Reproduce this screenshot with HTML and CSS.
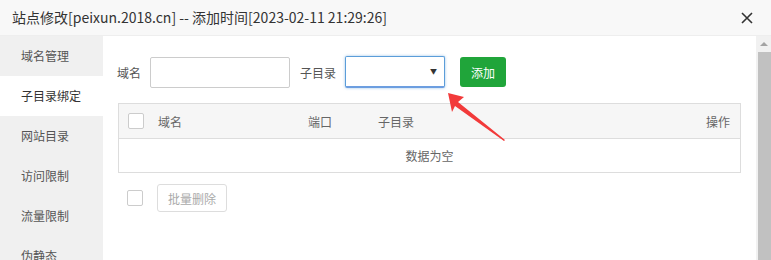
FILE: index.html
```html
<!DOCTYPE html>
<html lang="zh-CN">
<head>
    <meta charset="UTF-8">
    <title>站点修改</title>
    <link rel="stylesheet" href="styles.css">
</head>
<body>
    <div class="dialog">
        <div class="dialog-title">
            <span>站点修改[peixun.2018.cn] -- 添加时间[2023-02-11 21:29:26]</span>
            <svg class="close" width="12" height="12" viewBox="0 0 12 12">
                <path d="M1 1L11 11M11 1L1 11" stroke="#333" stroke-width="1.6" fill="none"/>
            </svg>
        </div>
        <div class="dialog-body">
            <ul class="side-menu">
                <li>域名管理</li>
                <li class="active">子目录绑定</li>
                <li>网站目录</li>
                <li>访问限制</li>
                <li>流量限制</li>
                <li>伪静态</li>
            </ul>

            <div class="content">
                <div class="form-row">
                    <span class="label">域名</span>
                    <input class="text-input" type="text">
                    <span class="label">子目录</span>
                    <div class="select">▼</div>
                    <button class="btn-green">添加</button>
                </div>

                <div class="table">
                    <div class="table-head">
                        <span class="checkbox"></span>
                        <span class="col-domain">域名</span>
                        <span class="col-port">端口</span>
                        <span class="col-dir">子目录</span>
                        <span class="col-op">操作</span>
                    </div>
                    <div class="table-empty">数据为空</div>
                </div>

                <div class="batch-row">
                    <span class="checkbox"></span>
                    <button class="btn-disabled">批量删除</button>
                </div>

                <!-- annotation arrow over the page -->
                <svg class="pointer" width="70" height="60" viewBox="0 0 70 60">
                    <polygon points="2,2 18,6 12,11 59,49 58,50 9,15 6,21" fill="#f23a3a"/>
                </svg>
            </div>

            <div class="scrollbar">
                <div class="scroll-up"></div>
                <div class="scroll-thumb"></div>
            </div>
        </div>
    </div>
</body>
</html>
```

FILE: styles.css
```css
body {
    margin: 0;
    padding: 0;
    background-color: #fff;
    color: #333;
    font-family: "Noto Sans CJK SC", "Liberation Sans", sans-serif;
    font-size: 12px;
    width: 771px;
    height: 260px;
    overflow: hidden;
}

.dialog {
    display: flex;
    flex-direction: column;
    height: 260px;
}

.dialog-title {
    height: 35px;
    line-height: 35px;
    background-color: #f8f8f8;
    border-bottom: 1px solid #eee;
    padding: 0 18px 0 12px;
    font-size: 14px;
    color: #333;
    display: flex;
    justify-content: space-between;
    align-items: center;
}

.dialog-body {
    flex: 1;
    display: flex;
    min-height: 0;
}

.side-menu {
    width: 103px;
    margin: 0;
    padding: 0;
    list-style: none;
    background-color: #f0f0f0;
}

.side-menu li {
    height: 40px;
    line-height: 40px;
    padding-left: 21px;
    color: #555;
}

.side-menu li.active {
    background-color: #fff;
    color: #333;
}

.content {
    flex: 1;
    padding: 20px 15px 0 14px;
    position: relative;
}

.form-row {
    display: flex;
    align-items: center;
    height: 32px;
}

.label {
    color: #555;
    margin-right: 9px;
}

.text-input {
    box-sizing: border-box;
    width: 140px;
    height: 31px;
    border: 1px solid #ccc;
    border-radius: 2px;
    margin: 0 10px 0 0;
    padding: 0;
}

.select {
    box-sizing: border-box;
    width: 100px;
    height: 32px;
    border: 1px solid #5b9dd9;
    border-bottom: 2px solid #6c9ee0;
    border-radius: 2px;
    box-shadow: 0 0 3px rgba(91, 157, 217, 0.6);
    text-align: right;
    padding-right: 7px;
    line-height: 29px;
    font-size: 7px;
    color: #333;
    margin-right: 15px;
}

.btn-green {
    width: 46px;
    height: 30px;
    background-color: #20a53a;
    color: #fff;
    border: none;
    border-radius: 3px;
    font-family: inherit;
    font-size: 12px;
    padding: 0;
}

.table {
    margin-top: 15px;
    margin-left: 1px;
    border: 1px solid #ddd;
}

.table-head {
    height: 34px;
    background-color: #f6f6f6;
    border-bottom: 1px solid #ddd;
    display: flex;
    align-items: center;
    padding: 0 10px 0 9px;
    color: #666;
}

.checkbox {
    box-sizing: border-box;
    width: 16px;
    height: 16px;
    border: 1px solid #ccc;
    border-radius: 2px;
    background-color: #fff;
    display: inline-block;
}

.col-domain {
    margin-left: 14px;
    width: 150px;
}

.col-port {
    width: 70px;
}

.col-dir {
    flex: 1;
}

.table-empty {
    height: 33px;
    line-height: 33px;
    text-align: center;
    color: #666;
}

.batch-row {
    display: flex;
    align-items: center;
    margin-top: 11px;
    padding-left: 10px;
    gap: 14px;
}

.btn-disabled {
    width: 70px;
    height: 28px;
    background-color: #fff;
    border: 1px solid #ddd;
    border-radius: 3px;
    color: #aaa;
    font-family: inherit;
    font-size: 12px;
    padding: 0;
}

.pointer {
    position: absolute;
    left: 343px;
    top: 55px;
}

.scrollbar {
    width: 15px;
    background-color: #f1f1f1;
    display: flex;
    flex-direction: column;
}

.scroll-up {
    height: 16px;
    position: relative;
}

.scroll-up::after {
    content: "";
    position: absolute;
    left: 4px;
    top: 6px;
    border-left: 4px solid transparent;
    border-right: 4px solid transparent;
    border-bottom: 4px solid #a3a3a3;
}

.scroll-thumb {
    flex: 1;
    margin-left: 2px;
    background-color: #c1c1c1;
}
```
